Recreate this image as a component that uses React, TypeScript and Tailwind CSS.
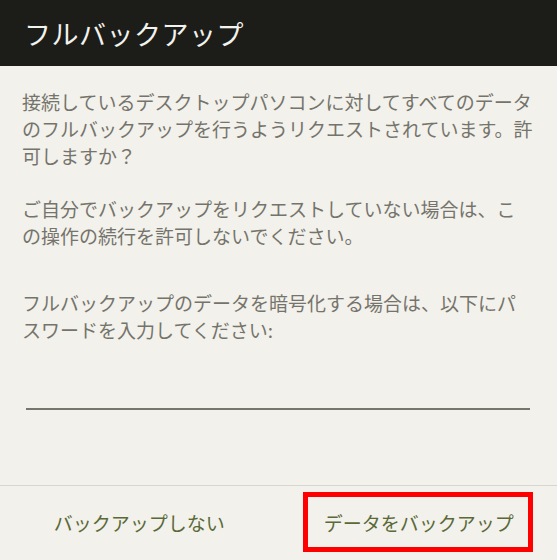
import React from "react";

const font = { fontFamily: '"Noto Sans CJK JP", "Noto Sans", sans-serif' };

const paragraphs: string[][] = [
    [
        "接続しているデスクトップパソコンに対してすべてのデータ",
        "のフルバックアップを行うようリクエストされています。許",
        "可しますか？",
    ],
    ["ご自分でバックアップをリクエストしていない場合は、こ", "の操作の続行を許可しないでください。"],
];

export default function App() {
    return (
        <div className="flex h-[560px] w-[557px] flex-col bg-[#f2f1eb]" style={font}>
            <header className="flex h-[66px] items-center bg-[#1c1c18] pl-[24px]">
                <h1 className="text-[27px] leading-none tracking-[0.5px] text-[#f2f2ee]">フルバックアップ</h1>
            </header>

            <div className="flex flex-1 flex-col pl-[22px] pr-[18px] pt-[22px] text-[19px] leading-[27px] text-[#75746c]">
                {paragraphs.map((lines, i) => (
                    <p key={i} className={i > 0 ? "mt-[26px]" : ""}>
                        {lines.map((l, j) => (
                            <span key={j} className="block whitespace-nowrap">
                                {l}
                            </span>
                        ))}
                    </p>
                ))}
                <p className="mt-[40px]">
                    <span className="block whitespace-nowrap">フルバックアップのデータを暗号化する場合は、以下にパ</span>
                    <span className="block whitespace-nowrap">スワードを入力してください:</span>
                </p>
                <input
                    type="password"
                    aria-label="パスワード"
                    className="mt-[35px] ml-[4px] mr-[9px] h-[32px] border-b-2 border-[#77756c] bg-transparent outline-none"
                />
            </div>

            <div className="grid h-[75px] grid-cols-2 border-t border-[#d7d6d0] text-[19px] text-[#5a6938]">
                <button className="flex items-center justify-center">バックアップしない</button>
                <div className="relative flex items-center justify-center">
                    <button className="pl-[2px]">データをバックアップ</button>
                    <span className="pointer-events-none absolute left-[24px] right-[24px] top-[6px] h-[60px] border-[5px] border-[#ff0000]" />
                </div>
            </div>
        </div>
    );
}
